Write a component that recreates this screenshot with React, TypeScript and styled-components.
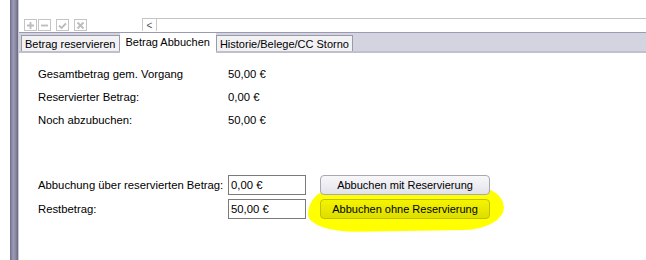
import styled, { createGlobalStyle } from 'styled-components';

const GlobalStyle = createGlobalStyle`
  html, body {
    margin: 0;
    padding: 0;
    background: #ffffff;
  }
  body {
    font-family: "Liberation Sans", Arial, sans-serif;
    font-size: 11.3px;
    color: #000;
  }
`;

const Page = styled.div`
  width: 646px;
  height: 260px;
  display: flex;
  background: #ffffff;
  overflow: hidden;
`;

const SideBar = styled.div`
  width: 8px;
  margin-left: 10px;
  background: linear-gradient(to right, #6e6e8c, #9c9cb4 40%, #8a8aa4 70%, #66667e);
  flex-shrink: 0;
`;

const Main = styled.div`
  flex: 1;
  display: flex;
  flex-direction: column;
  border-left: 1px solid #c8c8d0;
`;

const Toolbar = styled.div`
  height: 32px;
  display: flex;
  align-items: flex-end;
  padding: 0 0 1px 5px;
  box-sizing: border-box;
`;

const ToolButton = styled.div<{ $gap?: number }>`
  width: 13px;
  height: 12px;
  flex-shrink: 0;
  border: 1px solid #c4c4c4;
  box-sizing: border-box;
  display: flex;
  align-items: center;
  justify-content: center;
  margin-right: ${({ $gap }) => $gap ?? 0}px;
`;

const NavBox = styled.div`
  margin-left: 55px;
  width: 15px;
  height: 13px;
  flex-shrink: 0;
  border-left: 1px solid #c8c8c8;
  border-right: 1px solid #c8c8c8;
  border-top: 1px solid #c4c4c4;
  box-sizing: border-box;
  display: flex;
  align-items: center;
  justify-content: center;
  color: #505050;
  font-size: 10px;
`;

const NavLine = styled.div`
  flex: 1;
  height: 13px;
  border-top: 1px solid #c4c4c4;
  box-sizing: border-box;
`;

const TabStrip = styled.div`
  height: 18px;
  display: flex;
  align-items: flex-end;
  background: #d4d4e0;
  border-top: 1px solid #9a9ab0;
  border-bottom: 2px solid #c0c0cc;
  padding-left: 2px;
`;

const Tab = styled.div<{ $active?: boolean }>`
  height: ${({ $active }) => ($active ? 20 : 16)}px;
  box-sizing: border-box;
  padding: 0 ${({ $active }) => ($active ? 5 : 3)}px;
  display: flex;
  align-items: center;
  font-size: 11px;
  background: ${({ $active }) => ($active ? '#ffffff' : '#f2f2f4')};
  border: 1px solid ${({ $active }) => ($active ? '#ffffff' : '#9a9aa8')};
  border-bottom: none;
  margin-bottom: ${({ $active }) => ($active ? -2 : 0)}px;
  padding-bottom: ${({ $active }) => ($active ? 3 : 0)}px;
`;

const Content = styled.div`
  flex: 1;
  position: relative;
  padding: 9px 0 0 19px;
  display: flex;
  flex-direction: column;
`;

const InfoRow = styled.div`
  height: 23px;
  display: flex;
  align-items: center;
`;

const Label = styled.span`
  width: 190px;
  flex-shrink: 0;
  white-space: nowrap;
`;

const Value = styled.span``;

const FormBlock = styled.div`
  margin-top: 44px;
  display: flex;
  flex-direction: column;
  gap: 4px;
`;

const FormRow = styled.div`
  height: 20px;
  display: flex;
  align-items: center;
`;

const Input = styled.div`
  width: 78px;
  height: 20px;
  box-sizing: border-box;
  border: 1px solid #7a7a7a;
  padding: 0 2px;
  display: flex;
  align-items: center;
  background: #fff;
`;

const ActionButton = styled.div<{ $highlight?: boolean }>`
  margin-left: 14px;
  width: 170px;
  height: 20px;
  box-sizing: border-box;
  border-radius: 4px;
  border: 1px solid ${({ $highlight }) => ($highlight ? '#c0c000' : '#a8a8b4')};
  background: ${({ $highlight }) =>
    $highlight
      ? 'linear-gradient(#f4f400, #dede00)'
      : 'linear-gradient(#f8f8fa, #e2e2ea)'};
  display: flex;
  align-items: center;
  justify-content: center;
  font-size: 11px;
  z-index: 1;
`;

const Highlight = styled.div`
  position: absolute;
  left: 289px;
  top: 136px;
  width: 196px;
  height: 42px;
  background: #ffff00;
  border-radius: 22px 26px 40px 50px / 24px 20px 22px 18px;
  transform: rotate(-1deg);
`;

const iconStroke = '#bcbcbc';

const Plus = () => (
  <svg width="9" height="9" viewBox="0 0 9 9">
    <path d="M4.5 1v7M1 4.5h7" stroke={iconStroke} strokeWidth="1.8" />
  </svg>
);
const Minus = () => (
  <svg width="9" height="9" viewBox="0 0 9 9">
    <path d="M1 4.5h7" stroke={iconStroke} strokeWidth="1.8" />
  </svg>
);
const Check = () => (
  <svg width="9" height="9" viewBox="0 0 9 9">
    <path d="M1 4.5l2.5 2.5L8 2.5" stroke={iconStroke} strokeWidth="1.8" fill="none" />
  </svg>
);
const Cross = () => (
  <svg width="9" height="9" viewBox="0 0 9 9">
    <path d="M1.5 1.5l6 6M7.5 1.5l-6 6" stroke={iconStroke} strokeWidth="1.8" />
  </svg>
);

export default function App() {
  return (
    <Page>
      <GlobalStyle />
      <SideBar />
      <Main>
        <Toolbar>
          <ToolButton $gap={1}><Plus /></ToolButton>
          <ToolButton $gap={5}><Minus /></ToolButton>
          <ToolButton $gap={5}><Check /></ToolButton>
          <ToolButton><Cross /></ToolButton>
          <NavBox>&lt;</NavBox>
          <NavLine />
        </Toolbar>
        <TabStrip>
          <Tab>Betrag reservieren</Tab>
          <Tab $active>Betrag Abbuchen</Tab>
          <Tab>Historie/Belege/CC Storno</Tab>
        </TabStrip>
        <Content>
          <Highlight />
          <InfoRow>
            <Label>Gesamtbetrag gem. Vorgang</Label>
            <Value>50,00 €</Value>
          </InfoRow>
          <InfoRow>
            <Label>Reservierter Betrag:</Label>
            <Value>0,00 €</Value>
          </InfoRow>
          <InfoRow>
            <Label>Noch abzubuchen:</Label>
            <Value>50,00 €</Value>
          </InfoRow>
          <FormBlock>
            <FormRow>
              <Label>Abbuchung über reservierten Betrag:</Label>
              <Input>0,00 €</Input>
              <ActionButton>Abbuchen mit Reservierung</ActionButton>
            </FormRow>
            <FormRow>
              <Label>Restbetrag:</Label>
              <Input>50,00 €</Input>
              <ActionButton $highlight>Abbuchen ohne Reservierung</ActionButton>
            </FormRow>
          </FormBlock>
        </Content>
      </Main>
    </Page>
  );
}
